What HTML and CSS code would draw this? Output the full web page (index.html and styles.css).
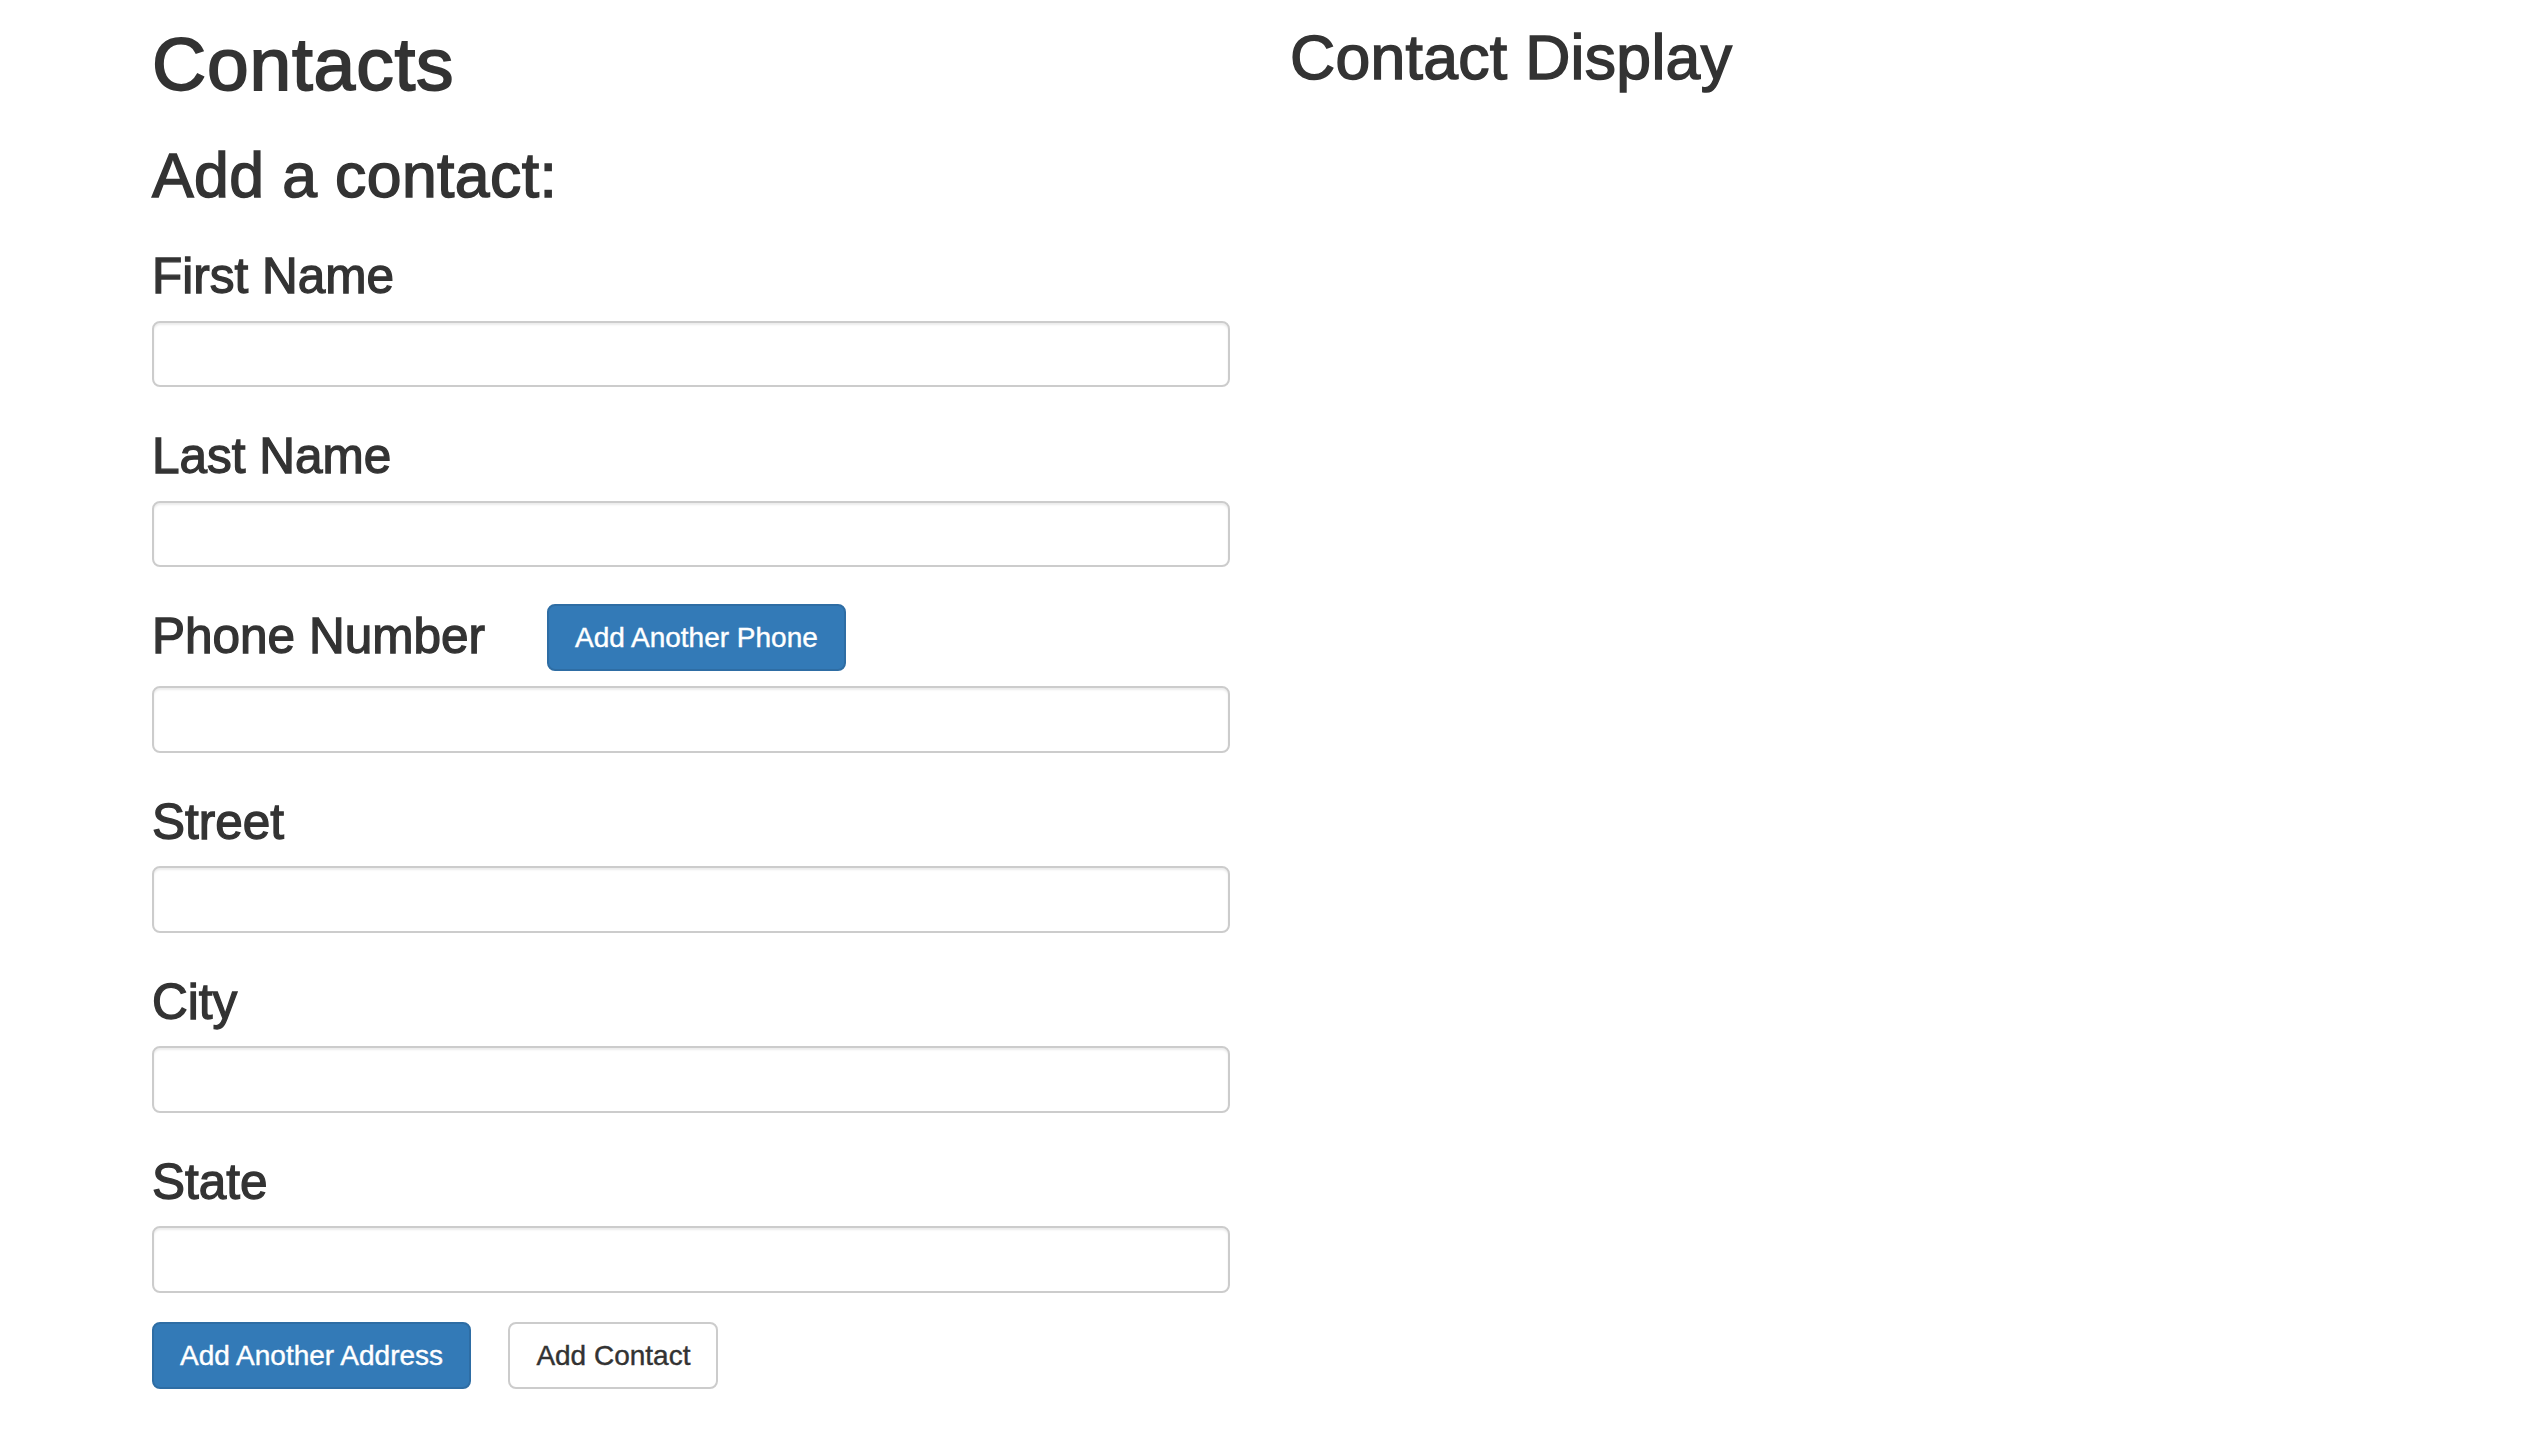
FILE: index.html
```html
<!DOCTYPE html>
<html lang="en">
<head>
<meta charset="utf-8">
<title>Contacts</title>
<link rel="stylesheet" href="styles.css">
</head>
<body>
<div class="page">
  <div class="col-left">
    <h1 class="title">Contacts</h1>
    <h2 class="subtitle">Add a contact:</h2>
    <form class="form">
      <div class="group">
        <label class="label">First Name</label>
        <input class="input" type="text">
      </div>
      <div class="group">
        <label class="label">Last Name</label>
        <input class="input" type="text">
      </div>
      <div class="group phone-group">
        <div class="phone-row">
          <label class="label">Phone Number</label>
          <button type="button" class="btn btn-primary">Add Another Phone</button>
        </div>
        <input class="input" type="text">
      </div>
      <div class="group">
        <label class="label">Street</label>
        <input class="input" type="text">
      </div>
      <div class="group">
        <label class="label">City</label>
        <input class="input" type="text">
      </div>
      <div class="group">
        <label class="label">State</label>
        <input class="input" type="text">
      </div>
      <div class="actions">
        <button type="button" class="btn btn-primary">Add Another Address</button>
        <button type="button" class="btn btn-default">Add Contact</button>
      </div>
    </form>
  </div>
  <div class="col-right">
    <h2 class="display-title">Contact Display</h2>
  </div>
</div>
</body>
</html>
```

FILE: styles.css
```css
html, body {
  margin: 0;
  padding: 0;
  background: #ffffff;
}

body {
  font-family: "Liberation Sans", Arial, Helvetica, sans-serif;
  color: #333333;
}

.page {
  display: grid;
  grid-template-columns: 1078px 1fr;
  column-gap: 60px;
  padding: 23px 0 0 152px;
}

.title {
  margin: 0;
  font-size: 75px;
  line-height: 82.5px;
  font-weight: normal;
  letter-spacing: 0.8px;
  -webkit-text-stroke: 1.8px #333333;
}

.subtitle,
.display-title {
  margin: 0;
  font-size: 62.5px;
  line-height: 68.75px;
  font-weight: normal;
  -webkit-text-stroke: 1.5px #333333;
}

.display-title {
  letter-spacing: 0.3px;
}

.subtitle {
  margin-top: 35.5px;
  letter-spacing: 0.4px;
}

.form {
  margin: 38.5px 0 0;
}

.group {
  display: flex;
  flex-direction: column;
  gap: 17.4px;
}

.group + .group {
  margin-top: 41px;
}

.phone-group {
  gap: 15px;
}

.group + .phone-group {
  margin-top: 36.7px;
}

.label {
  display: block;
  font-size: 49.5px;
  line-height: 55px;
  font-weight: normal;
  -webkit-text-stroke: 1.3px #333333;
}

.phone-row {
  display: flex;
  align-items: flex-start;
  gap: 62px;
}

.phone-row .label {
  margin-top: 4.3px;
}

.input {
  display: block;
  width: 100%;
  height: 66.6px;
  box-sizing: border-box;
  margin: 0;
  padding: 0 24px;
  border: 2px solid #cccccc;
  border-radius: 8px;
  background: #ffffff;
  box-shadow: inset 0 2px 2px rgba(0, 0, 0, 0.075);
  font-family: inherit;
  font-size: 28px;
  color: #555555;
}

.actions {
  display: flex;
  gap: 37.3px;
  margin-top: 29px;
}

.btn {
  display: inline-block;
  box-sizing: border-box;
  height: 67.4px;
  margin: 0;
  padding: 0 26px;
  border: 2px solid transparent;
  border-radius: 8px;
  font-family: inherit;
  font-size: 28px;
  line-height: 63px;
  white-space: nowrap;
  cursor: pointer;
  -webkit-text-stroke: 0.4px currentColor;
}

.btn-primary {
  background: #337ab7;
  border-color: #2e6da4;
  color: #ffffff;
}

.btn-default {
  background: #ffffff;
  border-color: #cccccc;
  color: #333333;
}
```
